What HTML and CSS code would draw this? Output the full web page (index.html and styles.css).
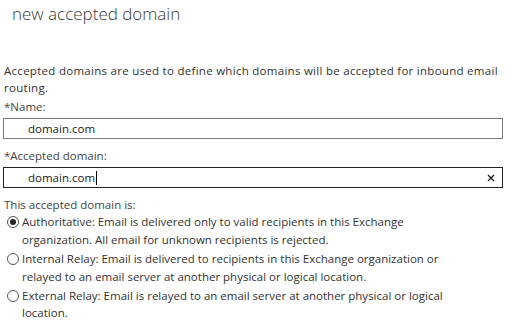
FILE: index.html
```html
<!DOCTYPE html>
<html>
<head>
<meta charset="utf-8">
<link rel="stylesheet" href="styles.css">
</head>
<body>
<div class="page">
  <h1 class="title">new accepted domain</h1>
  <p class="desc">Accepted domains are used to define which domains will be accepted for inbound email<br>routing.</p>
  <div class="label">*Name:</div>
  <div class="field"><span class="value">domain.com</span></div>
  <div class="label">*Accepted domain:</div>
  <div class="field focused"><span class="value">domain.com</span><span class="caret"></span>
    <svg class="clear" width="8" height="8" viewBox="0 0 8 8"><path d="M1 1L7 7M7 1L1 7" stroke="#222" stroke-width="1.4" fill="none"/></svg>
  </div>
  <div class="label group-label">This accepted domain is:</div>
  <div class="options">
    <div class="option"><span class="radio checked"></span><span class="opt-text">Authoritative: Email is delivered only to valid recipients in this Exchange<br>organization. All email for unknown recipients is rejected.</span></div>
    <div class="option"><span class="radio"></span><span class="opt-text">Internal Relay: Email is delivered to recipients in this Exchange organization or<br>relayed to an email server at another physical or logical location.</span></div>
    <div class="option"><span class="radio"></span><span class="opt-text">External Relay: Email is relayed to an email server at another physical or logical<br>location.</span></div>
  </div>
</div>
</body>
</html>
```

FILE: styles.css
```css
html, body {
  margin: 0;
  padding: 0;
  background: #ffffff;
}
.page {
  font-family: "Open Sans", "Noto Sans", sans-serif;
  font-size: 11.5px;
  color: #333333;
  padding: 0 20px 0 4px;
  width: 499px;
}
.title {
  font-family: "Open Sans", sans-serif;
  font-weight: 300;
  font-size: 17px;
  line-height: 24px;
  color: #3a3a3a;
  margin: 2px 0 0 8px;
}
.desc {
  margin: 36px 0 0 0;
  line-height: 17px;
  letter-spacing: 0.28px;
  white-space: nowrap;
}
.label {
  line-height: 17px;
  color: #444444;
  margin-top: 2px;
}
.field {
  box-sizing: border-box;
  height: 21px;
  width: 500px;
  margin: 3px 0 0 -1px;
  border: 1px solid #7a7a7a;
  display: flex;
  align-items: center;
  padding-left: 24px;
  color: #222222;
}
.field + .label {
  margin-top: 8px;
}
.field.focused {
  border-color: #222222;
}
.caret {
  display: inline-block;
  width: 1px;
  height: 14px;
  background: #000;
  margin-left: 1px;
}
.clear {
  margin-left: auto;
  margin-right: 7px;
}
.options {
  display: flex;
  flex-direction: column;
  gap: 1px;
}
.option {
  display: flex;
  align-items: flex-start;
  line-height: 18px;
  white-space: nowrap;
}
.opt-text {
  line-height: 18px;
}
.options .option:last-child .opt-text {
  line-height: 17px;
}
.radio {
  box-sizing: border-box;
  flex: none;
  width: 12px;
  height: 12px;
  border: 1px solid #555555;
  border-radius: 50%;
  margin: 3px 3px 0 3px;
  display: flex;
  align-items: center;
  justify-content: center;
}
.radio.checked::after {
  content: "";
  width: 6px;
  height: 6px;
  border-radius: 50%;
  background: #222222;
}
```
